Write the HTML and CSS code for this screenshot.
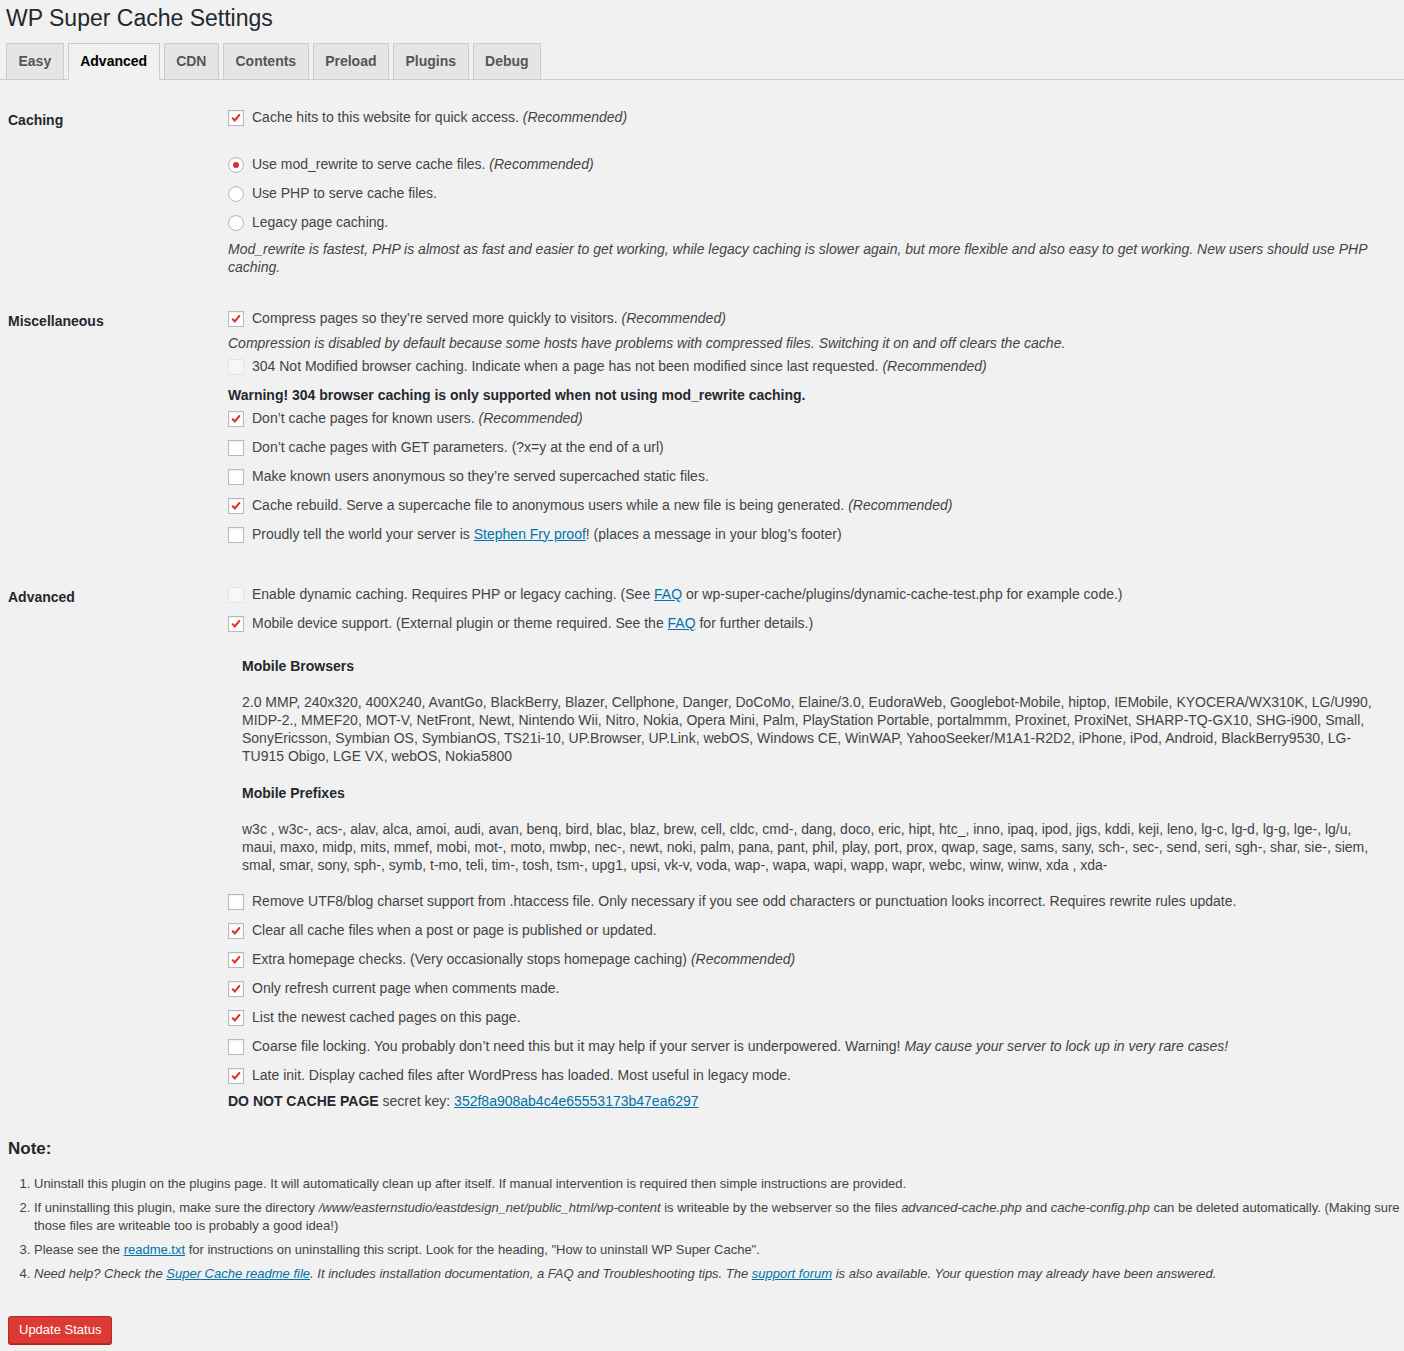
FILE: index.html
```html
<!DOCTYPE html>
<html lang="en">

<head>
    <meta charset="UTF-8">
    <title>WP Super Cache Settings</title>
    <link rel="stylesheet" href="styles.css">
</head>

<body>
    <div class="wrap">
        <h1 class="page-title">WP Super Cache Settings</h1>

        <nav class="nav-tabs">
            <a class="nav-tab" href="#">Easy</a>
            <a class="nav-tab active" href="#">Advanced</a>
            <a class="nav-tab" href="#">CDN</a>
            <a class="nav-tab" href="#">Contents</a>
            <a class="nav-tab" href="#">Preload</a>
            <a class="nav-tab" href="#">Plugins</a>
            <a class="nav-tab" href="#">Debug</a>
        </nav>

        <form class="form-table">
            <!-- Caching -->
            <div class="section">
                <div class="label">Caching</div>
                <div class="field">
                    <label class="opt"><span class="cb checked"><svg viewBox="0 0 16 16"><polyline points="3.6,7.6 6.6,10.8 12.4,3.8"/></svg></span><span>Cache hits to this website for quick access. <em>(Recommended)</em></span></label>
                    <div class="spacer"></div>
                    <label class="opt"><span class="radio checked"></span><span>Use mod_rewrite to serve cache files. <em>(Recommended)</em></span></label>
                    <label class="opt"><span class="radio"></span><span>Use PHP to serve cache files.</span></label>
                    <label class="opt"><span class="radio"></span><span>Legacy page caching.</span></label>
                    <p class="desc">Mod_rewrite is fastest, PHP is almost as fast and easier to get working, while legacy caching is slower again, but more flexible and also easy to get working. New users should use PHP caching.</p>
                </div>
            </div>

            <!-- Miscellaneous -->
            <div class="section misc">
                <div class="label">Miscellaneous</div>
                <div class="field">
                    <label class="opt"><span class="cb checked"><svg viewBox="0 0 16 16"><polyline points="3.6,7.6 6.6,10.8 12.4,3.8"/></svg></span><span>Compress pages so they’re served more quickly to visitors. <em>(Recommended)</em></span></label>
                    <p class="desc tight">Compression is disabled by default because some hosts have problems with compressed files. Switching it on and off clears the cache.</p>
                    <label class="opt"><span class="cb disabled"></span><span>304 Not Modified browser caching. Indicate when a page has not been modified since last requested. <em>(Recommended)</em></span></label>
                    <p class="warning"><strong>Warning! 304 browser caching is only supported when not using mod_rewrite caching.</strong></p>
                    <label class="opt"><span class="cb checked"><svg viewBox="0 0 16 16"><polyline points="3.6,7.6 6.6,10.8 12.4,3.8"/></svg></span><span>Don’t cache pages for known users. <em>(Recommended)</em></span></label>
                    <label class="opt"><span class="cb"></span><span>Don’t cache pages with GET parameters. (?x=y at the end of a url)</span></label>
                    <label class="opt"><span class="cb"></span><span>Make known users anonymous so they’re served supercached static files.</span></label>
                    <label class="opt"><span class="cb checked"><svg viewBox="0 0 16 16"><polyline points="3.6,7.6 6.6,10.8 12.4,3.8"/></svg></span><span>Cache rebuild. Serve a supercache file to anonymous users while a new file is being generated. <em>(Recommended)</em></span></label>
                    <label class="opt"><span class="cb"></span><span>Proudly tell the world your server is <a href="#">Stephen Fry proof</a>! (places a message in your blog’s footer)</span></label>
                </div>
            </div>

            <!-- Advanced -->
            <div class="section">
                <div class="label">Advanced</div>
                <div class="field">
                    <label class="opt"><span class="cb disabled"></span><span>Enable dynamic caching. Requires PHP or legacy caching. (See <a href="#">FAQ</a> or wp-super-cache/plugins/dynamic-cache-test.php for example code.)</span></label>
                    <label class="opt"><span class="cb checked"><svg viewBox="0 0 16 16"><polyline points="3.6,7.6 6.6,10.8 12.4,3.8"/></svg></span><span>Mobile device support. (External plugin or theme required. See the <a href="#">FAQ</a> for further details.)</span></label>

                    <div class="mobile">
                        <h4>Mobile Browsers</h4>
                        <p>2.0 MMP, 240x320, 400X240, AvantGo, BlackBerry, Blazer, Cellphone, Danger, DoCoMo, Elaine/3.0, EudoraWeb, Googlebot-Mobile, hiptop, IEMobile, KYOCERA/WX310K, LG/U990, MIDP-2., MMEF20, MOT-V, NetFront, Newt, Nintendo Wii, Nitro, Nokia, Opera Mini, Palm, PlayStation Portable, portalmmm, Proxinet, ProxiNet, SHARP-TQ-GX10, SHG-i900, Small, SonyEricsson, Symbian OS, SymbianOS, TS21i-10, UP.Browser, UP.Link, webOS, Windows CE, WinWAP, YahooSeeker/M1A1-R2D2, iPhone, iPod, Android, BlackBerry9530, LG-TU915 Obigo, LGE VX, webOS, Nokia5800</p>
                        <h4>Mobile Prefixes</h4>
                        <p>w3c , w3c-, acs-, alav, alca, amoi, audi, avan, benq, bird, blac, blaz, brew, cell, cldc, cmd-, dang, doco, eric, hipt, htc_, inno, ipaq, ipod, jigs, kddi, keji, leno, lg-c, lg-d, lg-g, lge-, lg/u, maui, maxo, midp, mits, mmef, mobi, mot-, moto, mwbp, nec-, newt, noki, palm, pana, pant, phil, play, port, prox, qwap, sage, sams, sany, sch-, sec-, send, seri, sgh-, shar, sie-, siem, smal, smar, sony, sph-, symb, t-mo, teli, tim-, tosh, tsm-, upg1, upsi, vk-v, voda, wap-, wapa, wapi, wapp, wapr, webc, winw, winw, xda , xda-</p>
                    </div>

                    <label class="opt"><span class="cb"></span><span>Remove UTF8/blog charset support from .htaccess file. Only necessary if you see odd characters or punctuation looks incorrect. Requires rewrite rules update.</span></label>
                    <label class="opt"><span class="cb checked"><svg viewBox="0 0 16 16"><polyline points="3.6,7.6 6.6,10.8 12.4,3.8"/></svg></span><span>Clear all cache files when a post or page is published or updated.</span></label>
                    <label class="opt"><span class="cb checked"><svg viewBox="0 0 16 16"><polyline points="3.6,7.6 6.6,10.8 12.4,3.8"/></svg></span><span>Extra homepage checks. (Very occasionally stops homepage caching) <em>(Recommended)</em></span></label>
                    <label class="opt"><span class="cb checked"><svg viewBox="0 0 16 16"><polyline points="3.6,7.6 6.6,10.8 12.4,3.8"/></svg></span><span>Only refresh current page when comments made.</span></label>
                    <label class="opt"><span class="cb checked"><svg viewBox="0 0 16 16"><polyline points="3.6,7.6 6.6,10.8 12.4,3.8"/></svg></span><span>List the newest cached pages on this page.</span></label>
                    <label class="opt"><span class="cb"></span><span>Coarse file locking. You probably don’t need this but it may help if your server is underpowered. Warning! <em>May cause your server to lock up in very rare cases!</em></span></label>
                    <label class="opt"><span class="cb checked"><svg viewBox="0 0 16 16"><polyline points="3.6,7.6 6.6,10.8 12.4,3.8"/></svg></span><span>Late init. Display cached files after WordPress has loaded. Most useful in legacy mode.</span></label>
                    <p class="secret"><strong>DO NOT CACHE PAGE</strong> secret key: <a href="#">352f8a908ab4c4e65553173b47ea6297</a></p>
                </div>
            </div>
        </form>

        <div class="note">
            <h3>Note:</h3>
            <ol>
                <li>Uninstall this plugin on the plugins page. It will automatically clean up after itself. If manual intervention is required then simple instructions are provided.</li>
                <li>If uninstalling this plugin, make sure the directory <em>/www/easternstudio/eastdesign_net/public_html/wp-content</em> is writeable by the webserver so the files <em>advanced-cache.php</em> and <em>cache-config.php</em> can be deleted automatically. (Making sure those files are writeable too is probably a good idea!)</li>
                <li>Please see the <a href="#">readme.txt</a> for instructions on uninstalling this script. Look for the heading, "How to uninstall WP Super Cache".</li>
                <li><em>Need help? Check the <a href="#">Super Cache readme file</a>. It includes installation documentation, a FAQ and Troubleshooting tips. The <a href="#">support forum</a> is also available. Your question may already have been answered.</em></li>
            </ol>
        </div>

        <button class="update-btn" type="button">Update Status</button>
    </div>
</body>

</html>
```

FILE: styles.css
```css
body {
    margin: 0;
    background: #f1f1f1;
    font-family: "Liberation Sans", Arial, sans-serif;
    font-size: 14px;
    line-height: 1.4;
    color: #444;
}

a {
    color: #0073aa;
    text-decoration: underline;
}

.wrap {
    padding: 0 4px 24px 6px;
}

.page-title {
    margin: 4px 0 10px;
    font-size: 23px;
    font-weight: 400;
    line-height: 29px;
    color: #23282d;
}

/* Tabs */
.nav-tabs {
    display: flex;
    margin: 0 -4px 0 -6px;
    padding-left: 6px;
    border-bottom: 1px solid #ccc;
}

.nav-tab {
    margin-left: 4px;
    margin-bottom: -1px;
    padding: 5px 11.5px 6px;
    border: 1px solid #ccc;
    background: #e5e5e5;
    font-size: 14px;
    font-weight: 700;
    line-height: 24px;
    color: #555;
    text-decoration: none;
}

.nav-tab:first-child {
    margin-left: 0;
}

.nav-tab.active {
    background: #f1f1f1;
    border-bottom-color: #f1f1f1;
    color: #000;
}

/* Form table */
.form-table {
    margin-top: 23px;
}

.section {
    display: grid;
    grid-template-columns: 222px 1fr;
    margin-bottom: 28px;
}

.section.misc {
    margin-bottom: 31px;
}

.label {
    padding: 8px 0 0 2px;
    font-size: 14px;
    font-weight: 700;
    line-height: 18px;
    color: #23282d;
}

.field {
    padding-right: 20px;
}

.field p {
    margin: 0;
}

.opt {
    display: flex;
    align-items: center;
    height: 29px;
    white-space: nowrap;
}

.spacer {
    height: 18px;
}

.desc {
    margin-top: 3px !important;
    font-style: italic;
    line-height: 18px;
}

.desc.tight {
    margin-top: 1px !important;
}

.warning {
    margin-top: 5px !important;
    line-height: 18px;
}

.warning strong,
.secret strong {
    color: #23282d;
}

/* Checkboxes and radios */
.cb,
.radio {
    flex: none;
    box-sizing: border-box;
    width: 16px;
    height: 16px;
    margin-right: 8px;
    border: 1px solid #b4b9be;
    background: #fff;
    box-shadow: inset 0 1px 2px rgba(0, 0, 0, 0.07);
}

.cb svg {
    display: block;
    width: 14px;
    height: 14px;
}

.cb polyline {
    fill: none;
    stroke: #d9302c;
    stroke-width: 2.4;
}

.cb.disabled {
    border-color: rgba(222, 222, 222, 0.75);
    background: #f7f7f7;
    box-shadow: none;
}

.radio {
    border-radius: 50%;
    position: relative;
}

.radio.checked::after {
    content: "";
    position: absolute;
    left: 4px;
    top: 4px;
    width: 6px;
    height: 6px;
    border-radius: 50%;
    background: #d9302c;
}

/* Mobile lists */
.mobile {
    padding: 19px 0 13px 14px;
}

.mobile h4 {
    margin: 0 0 18px;
    font-size: 14px;
    line-height: 18px;
    color: #23282d;
}

.mobile p {
    margin: 0 0 19px;
    line-height: 18px;
}

.mobile p:last-child {
    margin-bottom: 0;
}

.secret {
    margin-top: 2px !important;
    line-height: 18px;
}

/* Note */
.note {
    margin-top: 1px;
}

.note h3 {
    margin: 0 0 0 2px;
    font-size: 17px;
    line-height: 22px;
    color: #23282d;
}

.note ol {
    margin: 15px 0 0;
    padding-left: 28px;
    font-size: 13px;
    line-height: 18px;
}

.note li {
    margin-bottom: 6px;
}

.update-btn {
    margin: 27px 0 0 2px;
    height: 28px;
    padding: 0 10px;
    border: 1px solid #b52b27;
    border-radius: 3px;
    background: #dd3a34;
    box-shadow: 0 1px 0 #a82521;
    font-family: "Liberation Sans", Arial, sans-serif;
    font-size: 13px;
    line-height: 26px;
    color: #fff;
    cursor: pointer;
}
```
